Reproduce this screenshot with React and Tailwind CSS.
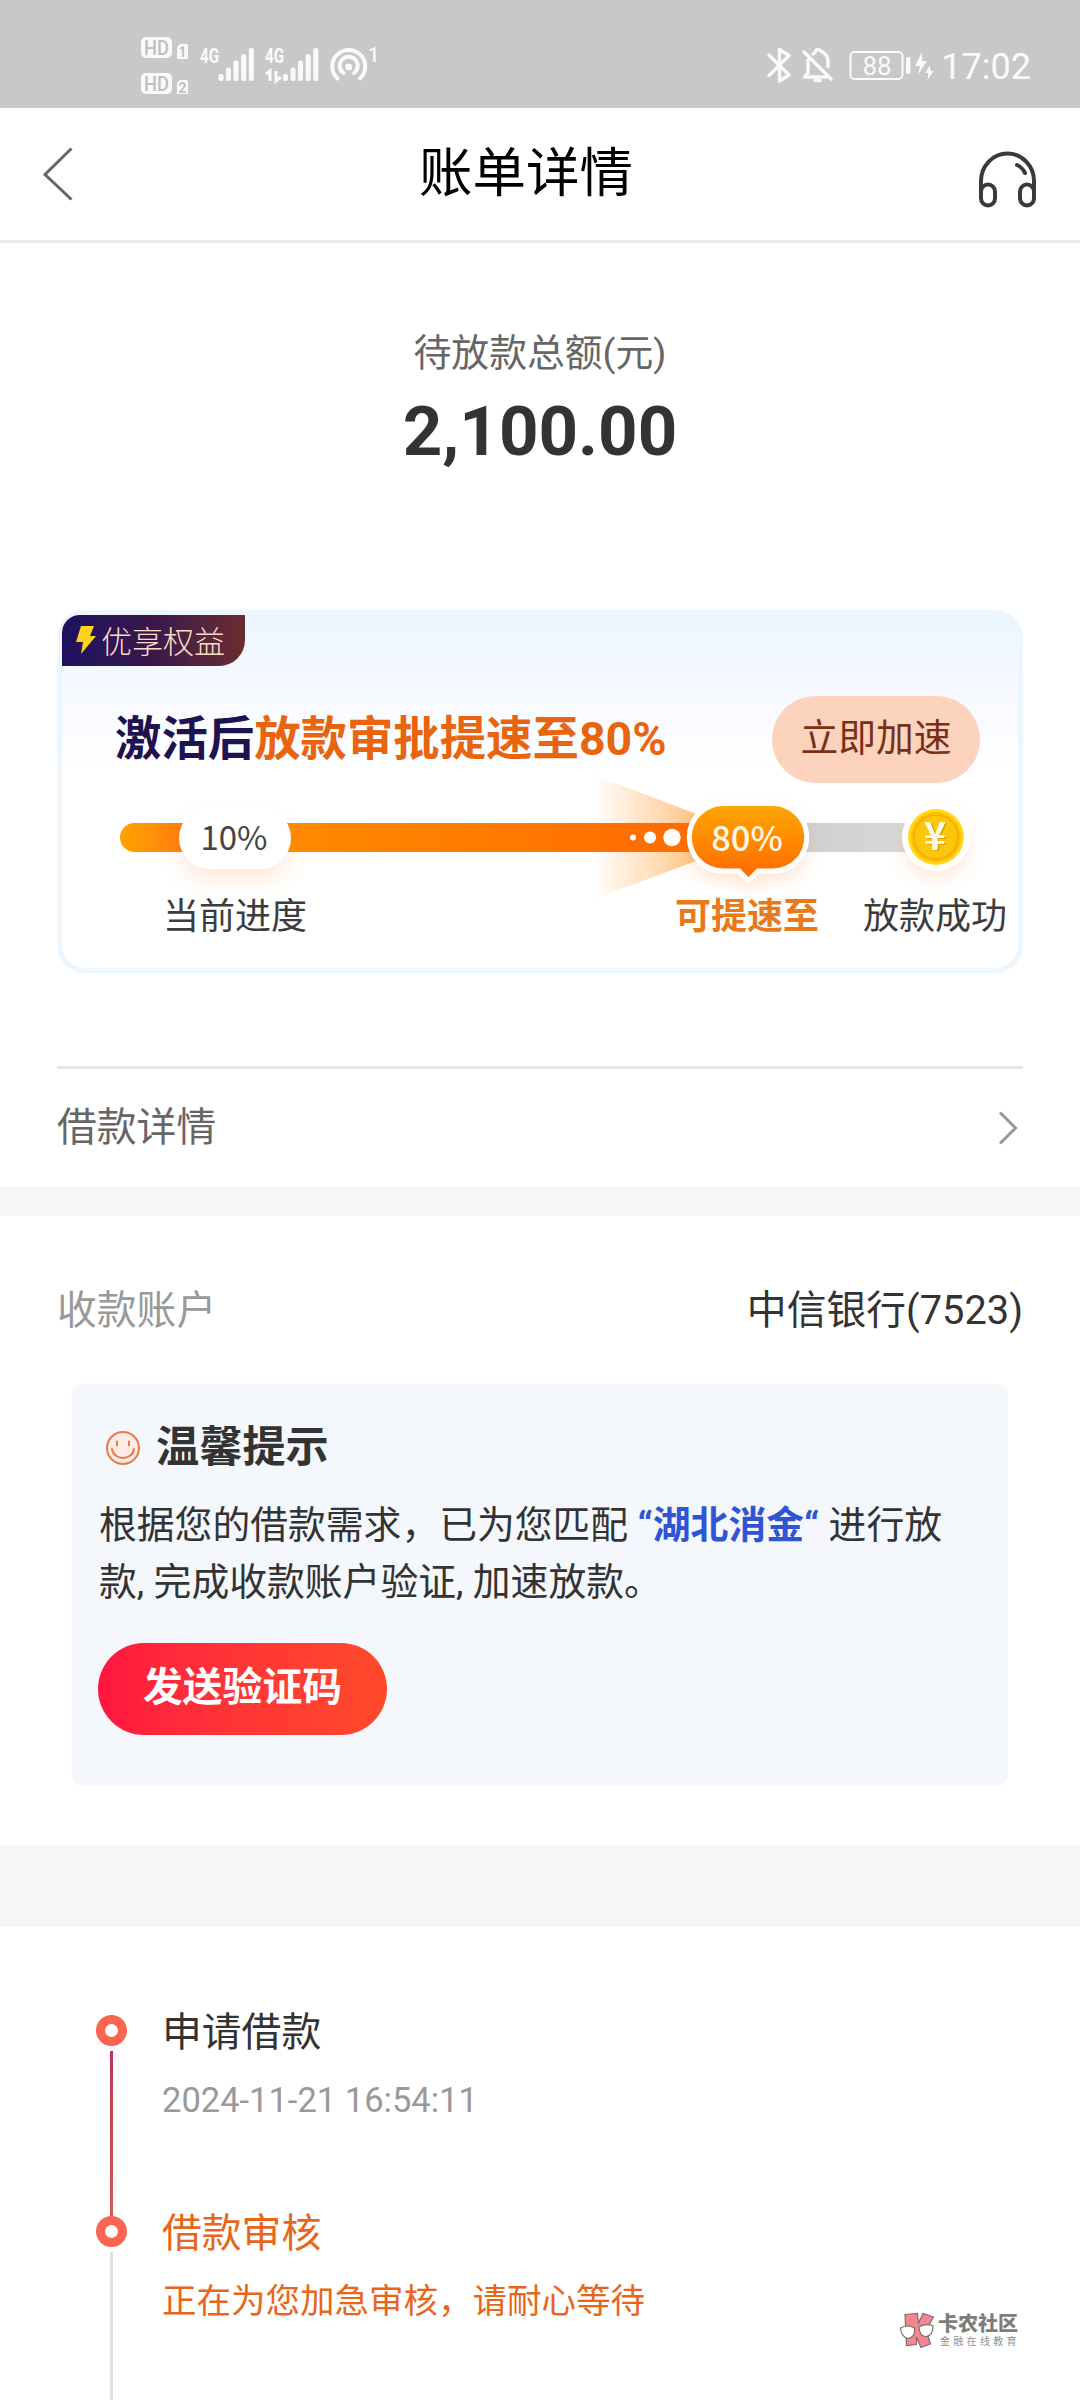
import React from "react";

const steps = [
  {
    title: "申请借款",
    note: "2024-11-21 16:54:11",
    titleColor: "text-[#333333]",
    noteColor: "text-[#999999]",
    line: "bg-linear-to-b from-[#c62f56] to-[#cc5a58]",
  },
  {
    title: "借款审核",
    note: "正在为您加急审核，请耐心等待",
    titleColor: "text-[#e8661a]",
    noteColor: "text-[#e8661a]",
    line: "bg-[#e0e0e0]",
  },
];

const SignalBars = ({ x }) => (
  <g fill="#fafafa">
    <rect x={x} y="74" width="5" height="7" rx="2" />
    <rect x={x + 7.5} y="67.5" width="5" height="13.5" rx="2" />
    <rect x={x + 15} y="60.5" width="5" height="20.5" rx="2" />
    <rect x={x + 22.7} y="54" width="5" height="27" rx="2" />
    <rect x={x + 30.3} y="48" width="5" height="33" rx="2" />
  </g>
);

const StatusLeft = () => (
  <svg className="w-[250px] h-[108px]" viewBox="135 0 250 108" fontFamily="Roboto, sans-serif">
    <rect x="141" y="37" width="31" height="21" rx="5" fill="#fafafa" />
    <rect x="141" y="73" width="31" height="21" rx="5" fill="#fafafa" />
    <path d="M177 47l3-3h6a2 2 0 0 1 2 2v13h-11z" fill="#fafafa" />
    <path d="M177 83l3-3h6a2 2 0 0 1 2 2v12h-11z" fill="#fafafa" />
    <g fill="#c0c0c0" fontWeight="500" textAnchor="middle">
      <text x="156.5" y="54.5" fontSize="20" textLength="25" lengthAdjust="spacingAndGlyphs">HD</text>
      <text x="156.5" y="90.5" fontSize="20" textLength="25" lengthAdjust="spacingAndGlyphs">HD</text>
      <text x="182.5" y="57" fontSize="14" fontWeight="700">1</text>
      <text x="182.5" y="92.5" fontSize="14" fontWeight="700">2</text>
    </g>
    <g fill="#fafafa" fontWeight="700" fontSize="20">
      <text x="200" y="63" textLength="19" lengthAdjust="spacingAndGlyphs">4G</text>
      <text x="265" y="63" textLength="19" lengthAdjust="spacingAndGlyphs">4G</text>
      <text x="368" y="62" fontSize="20" fontWeight="500">1</text>
    </g>
    <SignalBars x={218.5} />
    <SignalBars x={283} />
    <path d="M266 74l4-3v10M276 71v10l5-4" fill="none" stroke="#fafafa" strokeWidth="3" />
    <g fill="none" stroke="#fafafa" strokeWidth="4" strokeLinecap="round">
      <path d="M337.5 78.5a16.5 16.5 0 1 1 22.5 0" />
      <path d="M343.5 73a9 9 0 1 1 10.5 0" />
    </g>
    <circle cx="348.7" cy="67" r="3.5" fill="#fafafa" />
  </svg>
);

const StatusRight = () => (
  <svg className="w-[172px] h-[108px]" viewBox="765 0 172 108" fontFamily="Roboto, sans-serif">
    <g fill="none" stroke="#fafafa" strokeWidth="3.4" strokeLinejoin="round" strokeLinecap="round">
      <path d="M769 55l20 20-9.5 6V49.5l9.5 6-20 20" />
      <path d="M804 52l27 27" />
      <path d="M808 60v13l-3.5 4H826" />
      <path d="M813 54c2-1.5 3-1.5 3-3.5 1-1.5 3-1.5 4 0 4 2 8 5 8 10v6" />
      <path d="M815 80.5h5" />
    </g>
    <rect x="850.5" y="52" width="52" height="27" rx="4" fill="none" stroke="#fafafa" strokeWidth="2" />
    <rect x="906" y="57" width="4.5" height="17" rx="1.5" fill="#fafafa" />
    <text x="877" y="74.5" fontSize="26" fill="#fafafa" textAnchor="middle">88</text>
    <path d="M922 52l-7 14h5l-2 9 9-14h-5zM930 65l-4.5 8h3l-1 7 6-9h-3z" fill="#fafafa" />
  </svg>
);

const StatusBar = () => (
  <div className="h-[108px] bg-[#c8c8c8] flex items-center pl-[135px] pr-[49px]">
    <StatusLeft />
    <div className="flex-1" />
    <StatusRight />
    <span className="w-[94px] text-right pt-[26px] text-[36px] leading-none text-[#fafafa] whitespace-nowrap">17:02</span>
  </div>
);

const Header = () => (
  <header className="h-[135px] border-b-3 border-[#ebebeb] flex items-center justify-between px-[42px]">
    <svg className="w-8 h-[54px]" viewBox="0 0 32 54" fill="none" stroke="#666666" strokeWidth="3">
      <path d="M29.5 1.5L3 27.5l26.5 25" />
    </svg>
    <h1 className="text-[53.5px] leading-[60px] text-black whitespace-nowrap">账单详情</h1>
    <svg className="w-[60px] h-[60px] mt-[11px]" viewBox="0 0 60 60" fill="none" stroke="#3a3a3c" strokeWidth="4">
      <path d="M3 49V31a26 27 0 0 1 53 0v18" />
      <rect x="3" y="34.5" width="14" height="21" rx="7" />
      <rect x="42" y="34.5" width="14" height="21" rx="7" />
      <path d="M39 15q5 2 8 8" strokeLinecap="round" />
    </svg>
  </header>
);

const Coin = () => (
  <svg className="absolute left-[843px] top-[30px] w-[72px] h-[76px] drop-shadow-[0_8px_8px_rgba(255,140,60,0.18)]" viewBox="0 0 72 76">
    <circle cx="36" cy="37" r="34" fill="#ffffff" />
    <circle cx="36" cy="37" r="28" fill="#ffd91a" />
    <circle cx="36" cy="37" r="25" fill="#ffbd00" />
    <circle cx="36" cy="37" r="22" fill="#fbc60c" stroke="#f5ab00" strokeWidth="1.5" />
    <text x="36.5" y="51" fontSize="38" fontWeight="700" textAnchor="middle" fill="#e79a00">¥</text>
    <text x="35" y="50" fontSize="38" fontWeight="700" textAnchor="middle" fill="#fffbe6">¥</text>
  </svg>
);

const ProgressTrack = () => (
  <div className="relative h-[130px] font-['Noto_Sans_CJK_SC',sans-serif]">
    <svg className="block w-[907px] h-[130px]" viewBox="57 770 907 130">
      <defs>
        <linearGradient id="head"><stop offset="0" stopColor="#ffa200" /><stop offset="1" stopColor="#ff7a10" /></linearGradient>
        <linearGradient id="bar"><stop offset="0" stopColor="#ff9200" /><stop offset="0.7" stopColor="#ff7600" /><stop offset="1" stopColor="#ff6a00" /></linearGradient>
        <linearGradient id="rest"><stop offset="0" stopColor="#cfcfcf" /><stop offset="1" stopColor="#d8d8d8" /></linearGradient>
        <linearGradient id="flare"><stop offset="0" stopColor="#ffa033" stopOpacity="0" /><stop offset="1" stopColor="#ff9422" stopOpacity="0.6" /></linearGradient>
      </defs>
      <path d="M592 774L704 817V858L592 900z" fill="url(#flare)" />
      <path d="M134.5 823H190V852H134.5a14.5 14.5 0 0 1 0-29z" fill="url(#head)" />
      <rect x="190" y="823" width="515" height="29" fill="url(#bar)" />
      <rect x="800" y="823" width="110" height="29" fill="url(#rest)" />
      <g fill="#ffffff">
        <circle cx="633" cy="837.5" r="3" />
        <circle cx="650" cy="837.5" r="6" />
        <circle cx="672" cy="837.5" r="8.7" />
      </g>
    </svg>
    <div className="absolute left-[122px] top-[37px] w-[112px] h-[62px] pr-[2px] rounded-full bg-white text-[#444444] text-[33px] leading-[58px] text-center shadow-[0_12px_20px_rgba(255,130,40,0.16)]">
      10%
    </div>
    <svg className="absolute left-[629px] top-[30px] w-[126px] h-[84px] drop-shadow-[0_8px_8px_rgba(255,130,50,0.2)]" viewBox="0 0 126 84">
      <defs>
        <linearGradient id="pill" x2="0" y2="1"><stop offset="0" stopColor="#ffa600" /><stop offset="1" stopColor="#ff6a00" /></linearGradient>
      </defs>
      <path
        d="M37 6H87a31 31 0 0 1 0 62.5H71L62.5 77L54 68.5H37A31 31 0 0 1 37 6z"
        fill="url(#pill)"
        stroke="#ffffff"
        strokeWidth="10"
        paintOrder="stroke"
      />
    </svg>
    <span className="absolute left-[634px] top-[37px] w-[112px] text-center text-[34.5px] leading-[58px] font-medium text-[#fff8e4]">80%</span>
    <Coin />
  </div>
);

const BoostCard = () => (
  <section className="mx-[57px] mt-[138px] h-[363px] rounded-[28px] border-[5px] border-[#eef6fd] bg-linear-to-b from-[#ecf6fe] via-[#f6f9ff] via-20% to-white to-45%">
    <div className="w-[183px] h-[51px] rounded-tl-[18px] rounded-br-[26px] bg-linear-to-r from-[#1d1060] via-[#3a174a] to-[#6b2c2c] flex items-center pl-[13px] pb-[3px] text-[31px] leading-none font-light text-[#fbdcc4]">
      <svg className="w-[22px] h-[30px] mr-[4px] mt-[2px]" viewBox="0 0 22 30">
        <path d="M6 1h13l-4 10h6L6 29l2-12H1z" fill="#ffd21a" />
      </svg>
      <span className="font-['Noto_Sans_CJK_SC',sans-serif] whitespace-nowrap">优享权益</span>
    </div>
    <div className="flex items-center justify-between h-[87px] mt-[30px] pl-[53px] pr-[38px]">
      <h2 className="text-[46.4px] font-bold text-[#1f1250] whitespace-nowrap">
        激活后<span className="text-[#e8640f]">放款审批提速至80%</span>
      </h2>
      <button className="w-[208px] h-[87px] rounded-full bg-[#fcd3bd] text-[#7a3015] text-[37.8px] pb-[2px]">立即加速</button>
    </div>
    <div className="-mt-[13px] -ml-[5px]">
      <ProgressTrack />
    </div>
    <div className="flex -mt-[10px] pl-[101px] text-[36px] leading-[54px] text-[#3c3c3c] whitespace-nowrap">
      <span className="w-[512px]">当前进度</span>
      <span className="w-[188px] font-bold text-[#e87a1c]">可提速至</span>
      <span>放款成功</span>
    </div>
  </section>
);

const TipBox = () => (
  <div className="mx-[72px] mt-[36px] h-[402px] rounded-[10px] bg-[#f4f7fc] pl-[27px] pt-[32px] text-[#333333]">
    <div className="flex items-center h-[60px] pl-[6px]">
      <svg className="w-[36px] h-[36px] mt-[3px]" viewBox="0 0 36 36" fill="none" stroke="#e8794a" strokeWidth="2" strokeLinecap="round">
        <circle cx="18" cy="18" r="16" fill="#fdece4" />
        <path d="M12 11.5v4M24 11.5v4M7 19c2 12 20 12 22 0" />
      </svg>
      <h3 className="ml-[15px] mt-[4px] text-[43.2px] font-bold">温馨提示</h3>
    </div>
    <p className="mt-[21px] w-[860px] text-[37.8px] leading-[56.7px]">
      根据您的借款需求，已为您匹配 <b className="font-bold text-[#2f55d4]">“湖北消金“</b> 进行放
      <br />
      款, 完成收款账户验证, 加速放款。
    </p>
    <button className="block mt-[33px] -ml-px w-[289px] h-[92px] rounded-full bg-linear-to-r from-[#ff143f] to-[#ff4a2a] text-white text-[39.8px] font-bold pb-[3px]">
      发送验证码
    </button>
  </div>
);

const Timeline = () => (
  <section className="h-[473px] overflow-hidden pt-[88px] pl-[96px]">
    {steps.map((step) => (
      <div key={step.title} className="flex h-[201px]">
        <div className="w-[31px] flex flex-col items-center">
          <div className="w-[31px] h-[31px] shrink-0 rounded-full border-[9.5px] border-[#fb6450] bg-white"></div>
          <div className={`w-[3px] h-[165px] mt-[5px] shrink-0 ${step.line}`}></div>
        </div>
        <div className="ml-[35px] -mt-[12px] whitespace-nowrap">
          <div className={`text-[39.8px] leading-[60px] ${step.titleColor}`}>{step.title}</div>
          <div className={`mt-[11px] text-[34.5px] leading-[52px] ${step.noteColor}`}>{step.note}</div>
        </div>
      </div>
    ))}
  </section>
);

const Watermark = () => (
  <div className="absolute left-[899px] top-[2310px] flex items-center gap-[3px] font-['Noto_Sans_CJK_SC',sans-serif]">
    <svg className="w-[36px] h-[40px]" viewBox="0 0 36 40" stroke="#7d6d70" strokeWidth="1.2">
      <path d="M6 4.500L18.500 3.500L19.500 13L24 3.500L34.500 7L27 20L31.500 34L22 37.500L17.500 27V34.500L7.500 35.500z" fill="#f7858f" />
      <path d="M1.500 18q7-4 14 0q1 9-6 10.500q-7-1-8-10.500z" fill="#ffffff" />
      <path d="M20 17q7-4 14-1q0 9-6.500 10.500q-7 0-7.500-9.500z" fill="#ffffff" />
    </svg>
    <div className="whitespace-nowrap">
      <div className="text-[20px] leading-[22px] font-black text-[#7d7d7d]">卡农社区</div>
      <div className="text-[10px] leading-[14px] tracking-[3.3px] pl-[2px] text-[#909090]">金融在线教育</div>
    </div>
  </div>
);

export default function App() {
  return (
    <div className="relative w-[1080px] h-[2400px] overflow-hidden bg-white font-[Roboto,'Noto_Sans_CJK_SC',sans-serif]">
      <StatusBar />
      {/* title sits between a narrow back arrow and the wider service icon */}
      <Header />
      <section className="pt-[82px] text-center">
        <p className="text-[37.8px] leading-[57px] text-[#666666]">待放款总额(元)</p>
        <p className="mt-[9px] text-[69px] leading-[81px] font-bold text-[#333333]">2,100.00</p>
      </section>
      <BoostCard />
      <div className="mx-[57px] mt-[93px] h-[120px] border-t-3 border-[#e6e6e6] flex items-center justify-between pr-[5px] text-[39.8px] text-[#666666]">
        <span>借款详情</span>
        <svg className="w-[20px] h-[34px]" viewBox="0 0 20 34" fill="none" stroke="#999999" strokeWidth="3">
          <path d="M2 1.5l15.5 15.5L2 32.5" />
        </svg>
      </div>
      <div className="h-[30px] bg-[#f6f6f9]"></div>
      <div className="mx-[57px] mt-[60px] mb-[38px] h-[70px] flex items-center justify-between text-[39.8px] text-[#333333]">
        <span className="text-[#999999]">收款账户</span>
        <span>中信银行(7523)</span>
      </div>
      <TipBox />
      <div className="mt-[59px] h-[82px] bg-[#f6f6f9]"></div>
      <Timeline />
      <Watermark />
    </div>
  );
}
